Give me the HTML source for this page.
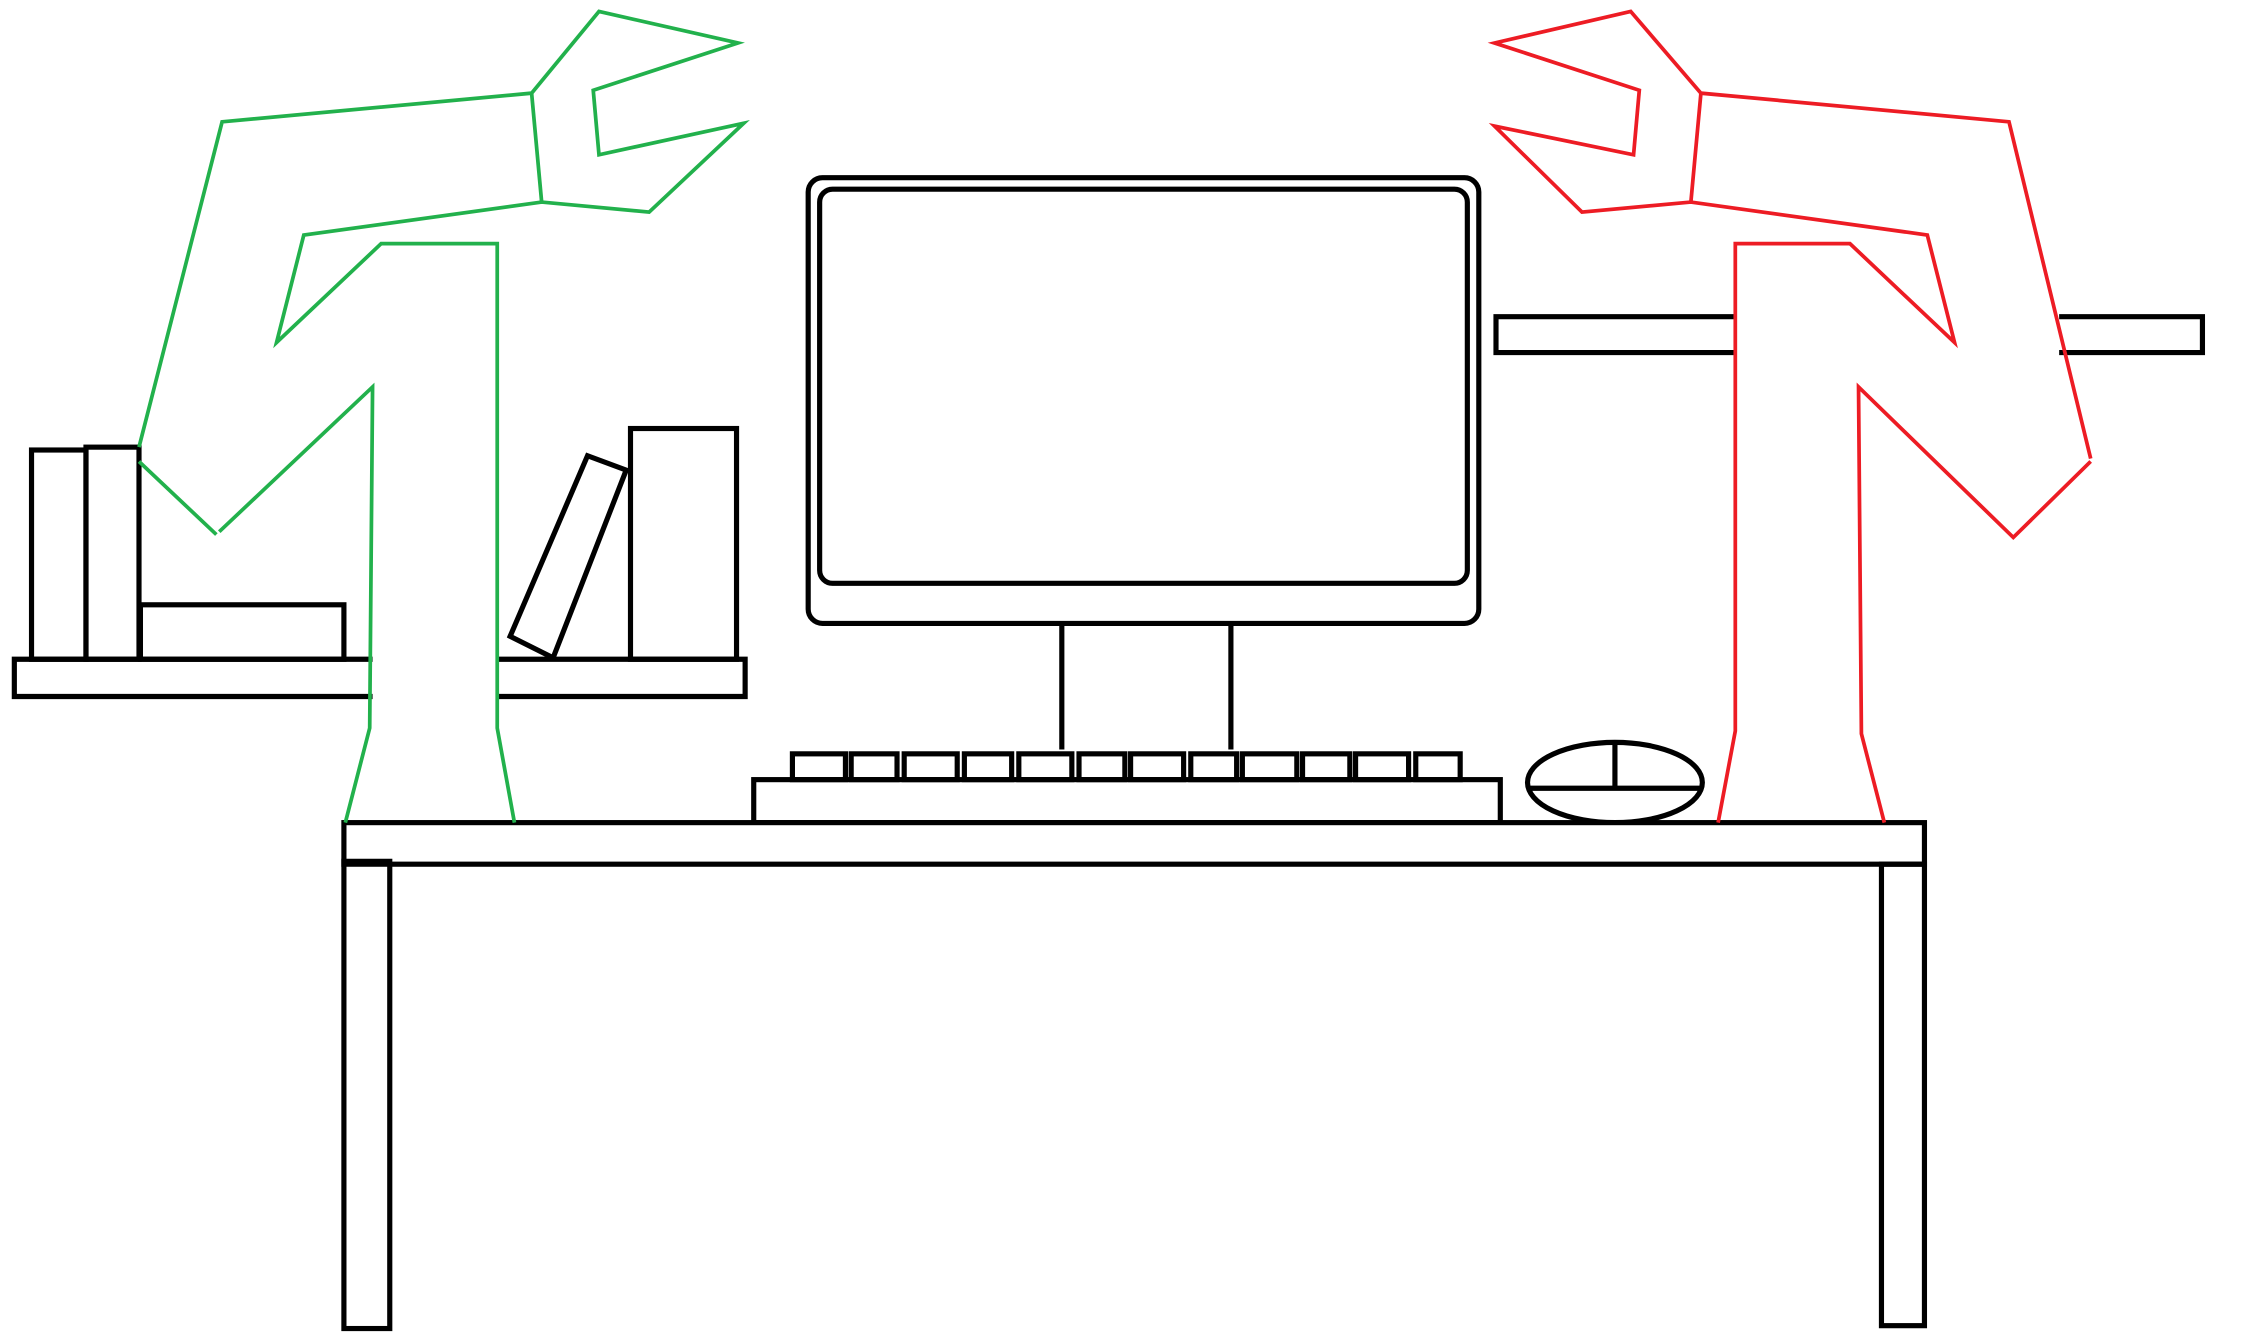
<!DOCTYPE html>
<html><head><meta charset="utf-8"><style>html,body{margin:0;padding:0;background:#fff;overflow:hidden}svg{display:block}</style></head>
<body>
<svg width="2244" height="1340" viewBox="0 0 1566 935" preserveAspectRatio="none" xmlns="http://www.w3.org/2000/svg">
<rect width="1566" height="935" fill="#fff"/>
<g fill="none" stroke="#000" stroke-width="3.6">
<path d="M260,460 H10 V486 H260 M347,460 H520 V486 H347"/>
<rect x="22" y="314" width="38" height="146"/>
<rect x="60" y="312" width="37" height="148"/>
<rect x="98" y="422" width="142" height="38"/>
<polygon points="356,444 410,318 437,328 386,459"/>
<rect x="440" y="299" width="74" height="161"/>
<path d="M1210,221 H1044 V246 H1210 M1437,221 H1537 V246 H1437"/>
<rect x="564" y="124" width="468" height="311" rx="10"/>
<rect x="572" y="132" width="452" height="275" rx="9"/>
<path d="M741,435 V523 M859,435 V523"/>
<rect x="526" y="544" width="521" height="30"/>
<g>
<rect x="553" y="526" width="37" height="18"/><rect x="594" y="526" width="32" height="18"/>
<rect x="631" y="526" width="37" height="18"/><rect x="673" y="526" width="33" height="18"/>
<rect x="711" y="526" width="37" height="18"/><rect x="753" y="526" width="32" height="18"/>
<rect x="789" y="526" width="37" height="18"/><rect x="831" y="526" width="32" height="18"/>
<rect x="867" y="526" width="38" height="18"/><rect x="909" y="526" width="33" height="18"/>
<rect x="946" y="526" width="37" height="18"/><rect x="988" y="526" width="31" height="18"/>
</g>
<ellipse cx="1127" cy="546" rx="61" ry="28"/>
<path d="M1067,550 H1187 M1127,518 V550"/>
<rect x="240" y="574" width="1103" height="29" fill="#fff"/>
<rect x="240" y="601" width="32" height="326"/>
<rect x="1313" y="603" width="30" height="322"/>
</g>
<g fill="none" stroke="#22b14c" stroke-width="2.6">
<polyline points="97,312 155,85 371,65 418,8 515,30 414,63 418,108 519,86 453,148 378,141 212,164 193,239 266,170 347,170 347,508 359,574"/>
<path d="M371,65 L378,141 M97,322 L151,373 M153,371 L260,270 L258,508 L241,574"/>
</g>
<g fill="none" stroke="#ed1c24" stroke-width="2.6">
<polyline points="1459,320 1402,85 1187,65 1138,8 1043,30 1144,63 1140,108 1043,88 1104,148 1180,141 1345,164 1364,239 1291,170 1211,170 1211,510 1199,574"/>
<path d="M1187,65 L1180,141 M1459,322 L1405,375 L1297,270 L1299,512 L1315,574"/>
</g>
</svg>
</body></html>
